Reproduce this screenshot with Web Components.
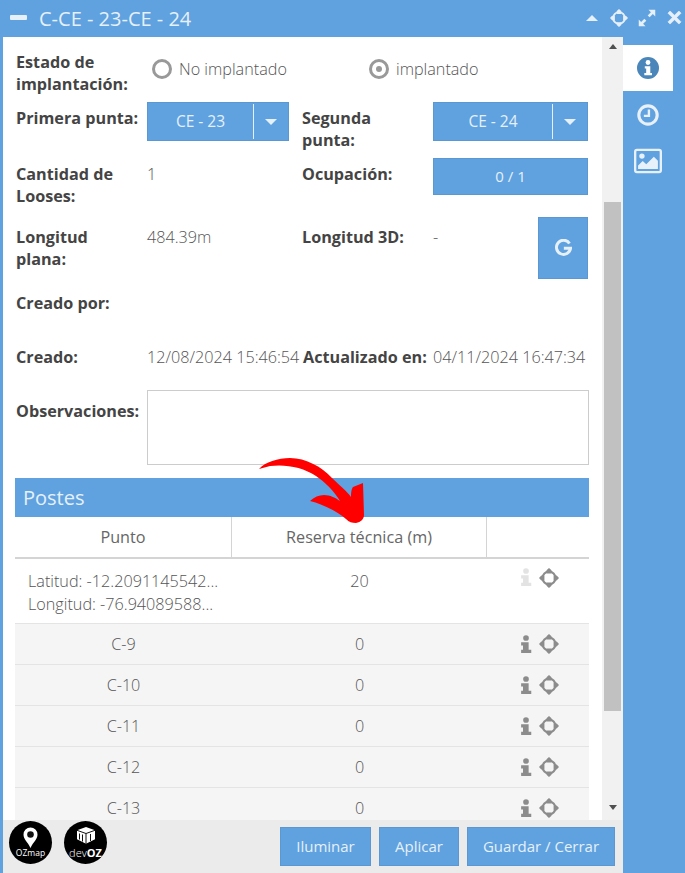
<!DOCTYPE html>
<html lang="es">
<head>
<meta charset="utf-8">
<title>C-CE - 23-CE - 24</title>
<style>
  html, body { margin: 0; padding: 0; height: 873px; overflow: hidden; background: #fff; }
  body { font-family: "Open Sans", sans-serif; }
</style>
</head>
<body>
<oz-window heading="C-CE - 23-CE - 24">
  <oz-form></oz-form>
  <oz-section heading="Postes"></oz-section>
  <oz-table>
    <oz-row kind="head" a="Punto" b="Reserva técnica (m)"></oz-row>
    <oz-row kind="coords" a="Latitud: -12.2091145542...|Longitud: -76.94089588..." b="20"></oz-row>
    <oz-row a="C-9" b="0"></oz-row>
    <oz-row a="C-10" b="0"></oz-row>
    <oz-row a="C-11" b="0"></oz-row>
    <oz-row a="C-12" b="0"></oz-row>
    <oz-row a="C-13" b="0"></oz-row>
  </oz-table>
</oz-window>

<script>
const BLUE = "#5fa2df";

// all the small glyphs live here, drawn on a 24 box
const ICONS = {
  info: `<circle cx="12" cy="12" r="12" fill="currentColor"/><circle cx="12" cy="6" r="2.6" fill="#fff"/><path d="M8.5 10h6v7.5h1.8V20H8v-2.500h2V12.500H8.500z" fill="#fff"/>`,
  clock: `<circle cx="12" cy="12" r="10" fill="none" stroke="currentColor" stroke-width="3.400"/><path d="M13 6v7H7.500" fill="none" stroke="currentColor" stroke-width="2.600"/>`,
  picture: `<rect x="1" y="2.500" width="22" height="19" rx="1.500" fill="none" stroke="currentColor" stroke-width="2"/><circle cx="6.800" cy="7.800" r="2.300" fill="currentColor"/><path d="M3.500 18.800v-3l4-3.800 3 2.800 6.500-6.500 3.500 3.500v7z" fill="currentColor"/>`,
  move: `<circle cx="12" cy="12" r="7.800" fill="none" stroke="currentColor" stroke-width="2.500"/><path d="M12 0l3 2.800v3.700H9V2.800zM12 24l3-2.800v-3.700H9v3.700zM0 12l2.800-3h3.700v6H2.800zM24 12l-2.800-3h-3.700v6h3.700z" fill="currentColor"/>`,
  expand: `<path d="M14 1h9v9l-3.200-3.200-4.300 4.300-2.600-2.600 4.300-4.300zM10 23H1v-9l3.200 3.200 4.300-4.300 2.600 2.600-4.300 4.300z" fill="currentColor"/>`,
  close: `<path d="M5 1.500l7 7 7-7 3.500 3.500-7 7 7 7-3.500 3.500-7-7-7 7L1.500 19l7-7-7-7z" fill="currentColor" stroke="currentColor" stroke-linejoin="round"/>`,
  "i": `<circle cx="12" cy="4" r="3.800" fill="currentColor"/><path d="M5.500 9.500h10v10H19V24H5.500v-4.500H8v-5.500H5.500z" fill="currentColor"/>`,
  google: `<path d="M20.500 6.300A10 10 0 1 0 22 13H12.500" fill="none" stroke="currentColor" stroke-width="4.200"/>`
};

class OzIcon extends HTMLElement {
  connectedCallback() {
    const size = this.getAttribute("size") || 18;
    this.attachShadow({ mode: "open" }).innerHTML = `
      <style>:host{display:inline-flex;flex:none;width:${size}px;height:${size}px;line-height:0} svg{width:100%;height:100%}</style>
      <svg viewBox="0 0 24 24">${ICONS[this.getAttribute("name")]}</svg>`;
  }
}

class OzWindow extends HTMLElement {
  connectedCallback() {
    this.attachShadow({ mode: "open" }).innerHTML = `
      <style>
        :host{display:flex;flex-direction:column;width:685px;height:873px;background:${BLUE};box-sizing:border-box;padding-left:3px;overflow:hidden;font-family:"Open Sans",sans-serif}
        header{height:37px;flex:none;display:flex;align-items:center;color:#e6f0f9;margin-left:-3px}
        .min{width:17px;height:5px;background:#e6f0f9;margin:0 12px 2px 10px;border-radius:1px}
        h1{margin:0 0 1px;font-size:20px;font-weight:400;flex:1}
        .tools{display:flex;align-items:center;margin-bottom:2px}
        .up{width:0;height:0;border:6px solid transparent;border-top:0;border-bottom:6px solid #e6f0f9;margin-right:12px}
        .tools oz-icon{margin-right:10px}
        .tools oz-icon:last-child{margin:0 3px 0 1px}
        .body{flex:1;display:flex;min-height:0}
        .main{width:620px;display:flex;flex-direction:column}
        .scroll{height:783px;display:flex;background:#fff}
        .content{width:599px;height:783px;overflow:hidden;box-sizing:border-box;padding-left:12px}
        .bar{width:21px;background:#f1f1f1;position:relative;display:flex;flex-direction:column;align-items:center}
        .bar i{display:block;width:0;height:0;border:4.500px solid transparent}
        .bar .top{border-top:0;border-bottom:5px solid #505050;margin-top:7px}
        .thumb{width:17px;height:509px;background:#c1c1c1;margin-top:153px}
        .bar .down{border-bottom:0;border-top:5px solid #505050;margin-top:94px}
        footer{flex:1;background:#ebebeb;display:flex;align-items:flex-start;padding:7px 8px 0 6px;gap:8px}
        footer .sp{flex:1}
        nav{flex:1;display:flex;flex-direction:column;padding-top:8px;align-items:flex-start;color:#e8f1fa}
        nav span{width:50px;height:46px;display:flex;align-items:center;justify-content:center;box-sizing:border-box;padding-top:2px}
        nav .on{background:#fff;color:#4a86ba;padding-top:0}
      </style>
      <header>
        <div class="min"></div><h1>${this.getAttribute("heading")}</h1>
        <div class="tools">
          <div class="up"></div>
          <oz-icon name="move" size="18"></oz-icon>
          <oz-icon name="expand" size="18"></oz-icon>
          <oz-icon name="close" size="15"></oz-icon>
        </div>
      </header>
      <div class="body">
        <div class="main">
          <div class="scroll">
            <div class="content"><slot></slot></div>
            <div class="bar"><i class="top"></i><div class="thumb"></div><i class="down"></i></div>
          </div>
          <footer>
            <oz-logo kind="map"></oz-logo><oz-logo kind="dev"></oz-logo>
            <div class="sp"></div>
            <oz-button w="91">Iluminar</oz-button>
            <oz-button w="80">Aplicar</oz-button>
            <oz-button w="148">Guardar / Cerrar</oz-button>
          </footer>
        </div>
        <nav>
          <span class="on"><oz-icon name="info" size="22"></oz-icon></span>
          <span><oz-icon name="clock" size="22"></oz-icon></span>
          <span><oz-icon name="picture" size="28"></oz-icon></span>
        </nav>
      </div>`;
  }
}

class OzButton extends HTMLElement {
  connectedCallback() {
    const w = this.getAttribute("w");
    const h = this.getAttribute("h") || 39;
    this.attachShadow({ mode: "open" }).innerHTML = `
      <style>
        :host{display:flex;align-items:center;justify-content:center;flex:none;box-sizing:border-box;width:${w}px;height:${h}px;padding-bottom:2px;background:${BLUE};border:1px solid #5b98d2;color:#e6f0f9;font-size:15px;font-weight:400}
      </style><slot></slot>`;
  }
}

class OzSelect extends HTMLElement {
  connectedCallback() {
    this.attachShadow({ mode: "open" }).innerHTML = `
      <style>
        :host{display:flex;box-sizing:border-box;height:39px;background:${BLUE};border:1px solid #5b98d2;color:#e6f0f9;font-size:15.500px;font-weight:400}
        .txt{flex:1;display:flex;align-items:center;justify-content:center;margin:1px 0;border-right:1px solid #e6f0f9;padding-bottom:1px}
        .arr{width:34px;display:flex;align-items:center;justify-content:center}
        .arr i{width:0;height:0;border:6.500px solid transparent;border-bottom:0;border-top:6.500px solid #e6f0f9}
      </style>
      <div class="txt"><slot></slot></div><div class="arr"><i></i></div>`;
  }
}

class OzRadio extends HTMLElement {
  connectedCallback() {
    const on = this.hasAttribute("checked");
    this.attachShadow({ mode: "open" }).innerHTML = `
      <style>
        :host{display:flex;align-items:center;flex:none;width:217px;font-size:16.200px;font-weight:300;color:#555}
        .c{width:20px;height:20px;box-sizing:border-box;border:3px solid #999;border-radius:50%;margin-right:7px;display:flex;align-items:center;justify-content:center}
        .c i{width:6px;height:6px;border-radius:50%;background:#999;display:${on ? "block" : "none"}}
      </style>
      <div class="c"><i></i></div><slot></slot>`;
  }
}

class OzForm extends HTMLElement {
  connectedCallback() {
    this.attachShadow({ mode: "open" }).innerHTML = `
      <style>
        :host{display:grid;grid-template-columns:132px 155px 131px 156px;grid-template-rows:56px 56px 59px 70px 54px 49px 75px;margin:9px 0 13px;font-size:16.200px;line-height:22px;color:#555;font-weight:300;white-space:nowrap}
        b{font-weight:700;color:#444;display:block;padding:5px 0 0 1px;white-space:normal}
        b.n{padding-left:0}
        .v{padding-top:5px}
        .t9 b,.t9.v{padding-top:9px}
        .radios{grid-column:2 / 5;padding:12px 0 0 5px;display:flex;align-items:flex-start}
        .sel{padding-right:1px}
        .g{display:flex;justify-content:space-between}
        .g oz-button{margin:0 1px 0 0}
        .area{grid-column:2 / 5;height:75px;box-sizing:border-box;border:1px solid #ccc;background:#fff}
        .obs{padding-top:5px}
      </style>
      <b>Estado de<br>implantación:</b>
      <div class="radios"><oz-radio>No implantado</oz-radio><oz-radio checked>implantado</oz-radio></div>

      <b>Primera punta:</b>
      <div style="width:142px"><oz-select>CE - 23</oz-select></div>
      <b class="n">Segunda<br>punta:</b>
      <div class="sel"><oz-select>CE - 24</oz-select></div>

      <b>Cantidad de<br>Looses:</b>
      <div class="v">1</div>
      <b class="n">Ocupación:</b>
      <div class="sel"><oz-button h="37" w="155">0 / 1</oz-button></div>

      <div class="t9"><b>Longitud<br>plana:</b></div>
      <div class="v t9">484.39m</div>
      <div class="t9"><b class="n">Longitud 3D:</b></div>
      <div class="g"><span class="v t9" style="display:block">-</span>
        <oz-button w="50" h="62"><oz-icon name="google" size="17"></oz-icon></oz-button></div>

      <b>Creado por:</b><div></div><div></div><div></div>

      <b>Creado:</b>
      <div class="v">12/08/2024 15:46:54</div>
      <b>Actualizado en:</b>
      <div class="v">04/11/2024 16:47:34</div>

      <div class="obs"><b>Observaciones:</b></div>
      <div class="area"></div>`;
  }
}

class OzSection extends HTMLElement {
  connectedCallback() {
    this.attachShadow({ mode: "open" }).innerHTML = `
      <style>
        :host{display:flex;align-items:center;width:574px;height:39px;background:${BLUE};color:#e6f0f9;font-size:20px;box-sizing:border-box;padding-left:8px}
      </style>${this.getAttribute("heading")}`;
  }
}

class OzTable extends HTMLElement {
  connectedCallback() {
    this.attachShadow({ mode: "open" }).innerHTML = `
      <style>:host{display:block;width:574px}</style><slot></slot>`;
  }
}

class OzRow extends HTMLElement {
  connectedCallback() {
    const kind = this.getAttribute("kind") || "row";
    const a = this.getAttribute("a");
    const b = this.getAttribute("b");
    const first = kind === "coords"
      ? a.split("|").map(l => `<div>${l}</div>`).join("")
      : a;
    const tools = kind === "head" ? "" :
      `<oz-icon class="${kind === "coords" ? "off" : ""}" name="i" size="18"></oz-icon><oz-icon name="move" size="20"></oz-icon>`;
    this.attachShadow({ mode: "open" }).innerHTML = `
      <style>
        :host{display:grid;grid-template-columns:217px 255px 102px;box-sizing:border-box;font-size:16.200px;font-weight:300;color:#555;height:41px;background:#f5f5f5;border-bottom:1px solid #e4e4e4}
        :host([kind=head]){height:42px;background:#fff;font-weight:400;border-bottom:2px solid #d4d4d4;color:#666}
        :host([kind=coords]){height:65px;background:#fff;border-bottom:1px solid #e4e4e4}
        .c{display:flex;align-items:center;justify-content:center;padding-bottom:1px}
        :host([kind=head]) .a,:host([kind=head]) .b{border-right:1px solid #d4d4d4}
        :host([kind=coords]) .c{align-items:flex-start;padding-top:11px;line-height:23px}
        :host([kind=coords]) .a{display:block;padding-left:13px}
        .t{justify-content:flex-start;padding-left:30px;gap:4px;color:#8c8c8c}
        :host([kind=coords]) .t{padding-top:9px}
        .off{color:#e3e3e3}
      </style>
      <div class="c a">${first}</div><div class="c b">${b}</div><div class="c t">${tools}</div>`;
  }
}

class OzLogo extends HTMLElement {
  connectedCallback() {
    const map = this.getAttribute("kind") === "map";
    const art = map
      ? `<path d="M21.500 6.500a7 7 0 0 1 7 7c0 5-4 7-7 13.500-3-6.500-7-8.500-7-13.500a7 7 0 0 1 7-7z" fill="#fff"/><circle cx="21.500" cy="13.500" r="3.300" fill="#111"/>`
      : `<path d="M22 6l9 3.300v9l-9 4.500-9-4.500V9.300z" fill="#fff"/><path d="M22 12.500v11M13 9.300l9 3.200 9-3.200M15.500 12.500v6M18.500 13.500v7M26.500 13v7" stroke="#111" fill="none"/>`;
    this.attachShadow({ mode: "open" }).innerHTML = `
      <style>
        :host{display:block;position:relative;flex:none;width:43px;height:43px;border-radius:50%;background:#000;margin:-6px 4px 0 0;overflow:hidden;color:#fff}
        svg{position:absolute;left:0;top:0;width:43px;height:43px}
        span{position:absolute;left:0;right:0;bottom:6px;text-align:center;font:${map ? "400 8.500px" : "300 11px"}/10px "Open Sans",sans-serif}
        span b{font-weight:700}
      </style>
      <svg viewBox="0 0 43 43">${art}</svg>
      <span>${map ? "OZmap" : "dev<b>OZ</b>"}</span>`;
  }
}

// the red arrow lies over the section bar and the table head
class OzArrow extends HTMLElement {
  connectedCallback() {
    this.attachShadow({ mode: "open" }).innerHTML = `
      <style>:host{position:absolute;left:0;top:0;pointer-events:none}</style>
      <svg width="685" height="873" style="display:block"><path fill="#f00" d="M259 469C265 462 278 458 290 458C306 458 322 467 332 478C340 486 347 491 351 497C351 491 352 488 353 487L363 483L364 515C364 519 361 522 356 523C352 523 349 522 346 519C337 511 322 504 310 501C314 497 319 495 324 495C330 495 336 498 340 501C334 491 325 482 316 476C303 467 285 464 270 466Z"/></svg>`;
  }
}

customElements.define("oz-icon", OzIcon);
customElements.define("oz-button", OzButton);
customElements.define("oz-select", OzSelect);
customElements.define("oz-radio", OzRadio);
customElements.define("oz-form", OzForm);
customElements.define("oz-section", OzSection);
customElements.define("oz-table", OzTable);
customElements.define("oz-row", OzRow);
customElements.define("oz-logo", OzLogo);
customElements.define("oz-window", OzWindow);
customElements.define("oz-arrow", OzArrow);
document.body.appendChild(document.createElement("oz-arrow"));
</script>
</body>
</html>
